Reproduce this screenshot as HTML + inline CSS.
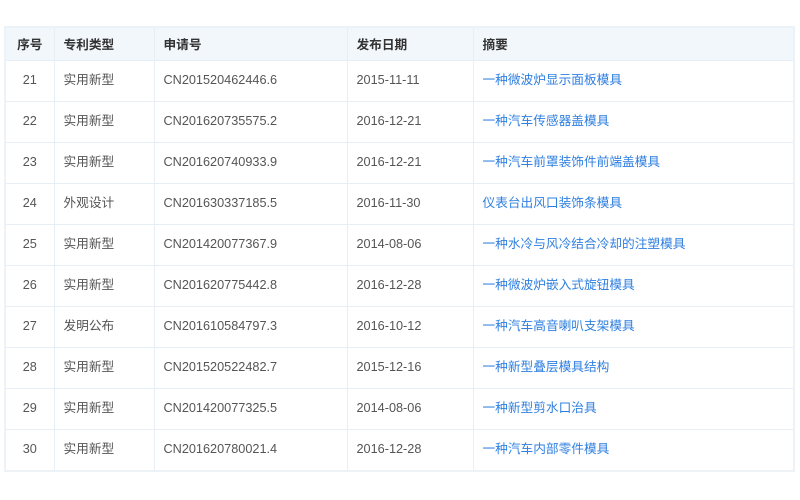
<!DOCTYPE html>
<html><head><meta charset="utf-8"><style>
body{margin:0;background:#fff;font-family:"Liberation Sans","Noto Sans CJK SC",sans-serif;font-size:12.7px;color:#555}
table{position:absolute;left:4px;top:26px;width:791px;border-collapse:collapse;table-layout:fixed;border:2px solid #edf2f7}
td,th{border:1px solid #e8eef5;padding:0 0 0 9px;text-align:left;vertical-align:baseline;line-height:16px}
th{height:23px;padding-top:9px;background:#f2f7fb;color:#333;font-weight:bold}
td{height:29px;padding-top:11px}
td:first-child,th:first-child{text-align:center;padding-left:0}
td a{color:#2f7fe0;text-decoration:none}
</style></head><body>
<table>
<colgroup><col style="width:49px"><col style="width:100px"><col style="width:193px"><col style="width:126px"><col></colgroup>
<tr><th>序号</th><th>专利类型</th><th>申请号</th><th>发布日期</th><th>摘要</th></tr>
<tr><td>21</td><td>实用新型</td><td>CN201520462446.6</td><td>2015-11-11</td><td><a>一种微波炉显示面板模具</a></td></tr>
<tr><td>22</td><td>实用新型</td><td>CN201620735575.2</td><td>2016-12-21</td><td><a>一种汽车传感器盖模具</a></td></tr>
<tr><td>23</td><td>实用新型</td><td>CN201620740933.9</td><td>2016-12-21</td><td><a>一种汽车前罩装饰件前端盖模具</a></td></tr>
<tr><td>24</td><td>外观设计</td><td>CN201630337185.5</td><td>2016-11-30</td><td><a>仪表台出风口装饰条模具</a></td></tr>
<tr><td>25</td><td>实用新型</td><td>CN201420077367.9</td><td>2014-08-06</td><td><a>一种水冷与风冷结合冷却的注塑模具</a></td></tr>
<tr><td>26</td><td>实用新型</td><td>CN201620775442.8</td><td>2016-12-28</td><td><a>一种微波炉嵌入式旋钮模具</a></td></tr>
<tr><td>27</td><td>发明公布</td><td>CN201610584797.3</td><td>2016-10-12</td><td><a>一种汽车高音喇叭支架模具</a></td></tr>
<tr><td>28</td><td>实用新型</td><td>CN201520522482.7</td><td>2015-12-16</td><td><a>一种新型叠层模具结构</a></td></tr>
<tr><td>29</td><td>实用新型</td><td>CN201420077325.5</td><td>2014-08-06</td><td><a>一种新型剪水口治具</a></td></tr>
<tr><td>30</td><td>实用新型</td><td>CN201620780021.4</td><td>2016-12-28</td><td><a>一种汽车内部零件模具</a></td></tr>
</table>
</body></html>
